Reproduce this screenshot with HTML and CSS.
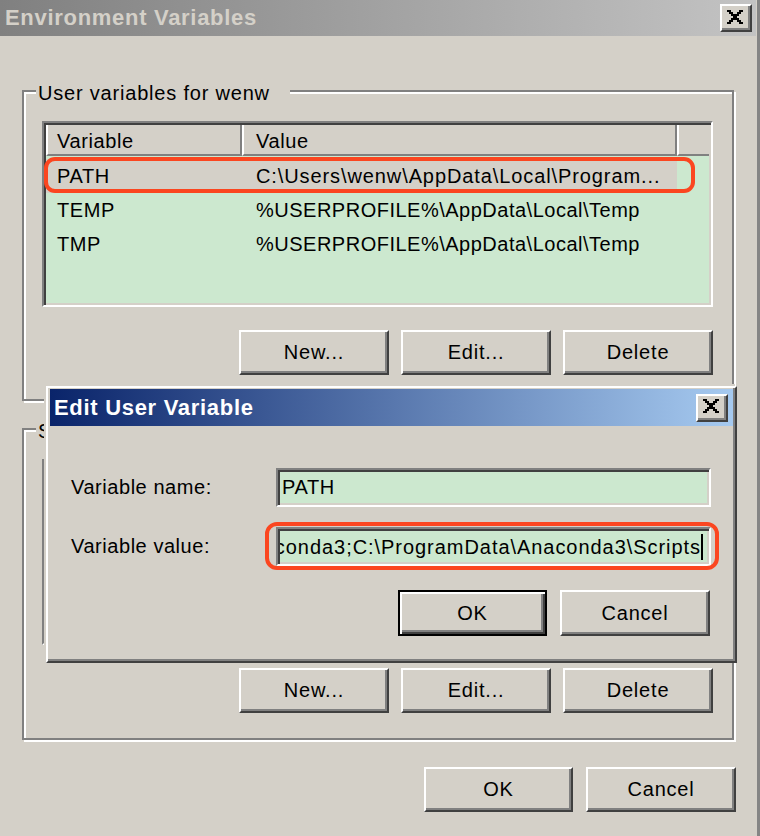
FILE: index.html
```html
<!DOCTYPE html>
<html>
<head>
<meta charset="utf-8">
<link rel="stylesheet" href="styles.css">
</head>
<body>
<div class="window">
  <div class="titlebar">
    <span class="title inactive">Environment Variables</span>
    <div class="close-btn">
      <svg width="16" height="14" viewBox="0 0 16 14" shape-rendering="crispEdges"><path fill="#000" d="M0 0h4v2H0z M12 0h4v2h-4z M2 2h4v2H2z M10 2h4v2h-4z M4 4h8v2H4z M6 6h4v2H6z M4 8h8v2H4z M2 10h4v2H2z M10 10h4v2h-4z M0 12h4v2H0z M12 12h4v2h-4z"/></svg>
    </div>
  </div>

  <div class="content">
    <div class="group">
      <div class="group-label">User variables for wenw</div>
      <div class="listview">
        <div class="lv-header">
          <div class="hc c1">Variable</div>
          <div class="hc c2">Value</div>
          <div class="hc c3"></div>
        </div>
        <div class="lv-body">
          <div class="lv-row selected annotated">
            <div class="cell c1">PATH</div>
            <div class="cell c2 val">C:\Users\wenw\AppData\Local\Program...</div>
          </div>
          <div class="lv-row">
            <div class="cell c1">TEMP</div>
            <div class="cell c2 val tight">%USERPROFILE%\AppData\Local\Temp</div>
          </div>
          <div class="lv-row">
            <div class="cell c1">TMP</div>
            <div class="cell c2 val tight">%USERPROFILE%\AppData\Local\Temp</div>
          </div>
        </div>
      </div>
      <div class="btn-row">
        <div class="btn">New...</div>
        <div class="btn">Edit...</div>
        <div class="btn">Delete</div>
      </div>
    </div>

    <div class="group group2">
      <div class="group-label short">S</div>
      <div class="listview">
        <div class="lv-header">
          <div class="hc c1"></div>
          <div class="hc c2"></div>
          <div class="hc c3"></div>
        </div>
      </div>
      <div class="btn-row">
        <div class="btn">New...</div>
        <div class="btn">Edit...</div>
        <div class="btn">Delete</div>
      </div>
    </div>

    <div class="dlg-buttons">
      <div class="btn">OK</div>
      <div class="btn">Cancel</div>
    </div>
  </div>

  <div class="dialog">
    <div class="titlebar active">
      <span class="title">Edit User Variable</span>
      <div class="close-btn small">
        <svg width="16" height="14" viewBox="0 0 16 14" shape-rendering="crispEdges"><path fill="#000" d="M0 0h4v2H0z M12 0h4v2h-4z M2 2h4v2H2z M10 2h4v2h-4z M4 4h8v2H4z M6 6h4v2H6z M4 8h8v2H4z M2 10h4v2H2z M10 10h4v2h-4z M0 12h4v2H0z M12 12h4v2h-4z"/></svg>
      </div>
    </div>
    <div class="dlg-body">
      <div class="form">
        <div class="flabel">Variable name:</div>
        <div class="field"><div class="field-text">PATH</div></div>
        <div class="flabel">Variable value:</div>
        <div class="field annotated-field"><div class="field-text end"><span class="caret-text">Anaconda3;C:\ProgramData\Anaconda3\Scripts</span></div></div>
      </div>
      <div class="dlg-actions">
        <div class="btn default">OK</div>
        <div class="btn">Cancel</div>
      </div>
    </div>
  </div>
</div>
</body>
</html>
```

FILE: styles.css
```css
* { box-sizing: border-box; }
html, body { margin: 0; padding: 0; }
body {
  width: 760px;
  height: 836px;
  overflow: hidden;
  background: #d4d0c8;
  font-family: "Liberation Sans", Arial, sans-serif;
  font-size: 20px;
  letter-spacing: 0.6px;
  color: #000;
}

.window {
  position: relative;
  width: 760px;
  height: 836px;
  border-right: 3px solid #858585;
  display: flex;
  flex-direction: column;
}

/* title bars */
.titlebar {
  height: 36px;
  margin-right: 1px;
  background: linear-gradient(to right, #808080, #c3c3c3);
  display: flex;
  align-items: center;
  justify-content: space-between;
  padding: 0 4px 0 5px;
  flex-shrink: 0;
}
.title {
  font-weight: bold;
  font-size: 22px;
  letter-spacing: 0.7px;
  color: #fff;
  white-space: nowrap;
}
.title.inactive { color: #d4d0c8; }

.close-btn {
  width: 32px;
  height: 28px;
  background: #d4d0c8;
  border: 2px solid;
  border-color: #fff #404040 #404040 #fff;
  box-shadow: inset -2px -2px 0 #808080;
  display: flex;
  align-items: center;
  justify-content: center;
  padding: 0 2px 3px 0;
}

/* main content */
.content {
  padding: 54px 0 0 22px;
  display: flex;
  flex-direction: column;
}

.group {
  width: 712px;
  height: 311px;
  border: 2px solid #808080;
  box-shadow: inset 2px 2px 0 #fff, 2px 2px 0 #fff;
  padding: 0 19px 0 18px;
  display: flex;
  flex-direction: column;
}
.group2 {
  margin-top: 27px;
  height: 312px;
}
.group-label {
  align-self: flex-start;
  margin: -11px 0 0 -6px;
  padding: 0 20px 0 2px;
  height: 24px;
  line-height: 24px;
  background: #d4d0c8;
  letter-spacing: 0.8px;
  white-space: nowrap;
}
.group-label.short { padding-right: 60px; }

.listview {
  width: 671px;
  height: 186px;
  margin-top: 16px;
  border: 2px solid;
  border-color: #808080 #fff #fff #808080;
  box-shadow: inset 2px 2px 0 #404040, inset -2px -2px 0 #d4d0c8;
  background: #cce8cf;
  padding: 2px;
  display: flex;
  flex-direction: column;
}
.lv-header {
  display: flex;
  height: 31px;
  flex-shrink: 0;
}
.hc {
  background: #d4d0c8;
  border-left: 2px solid #fff;
  border-right: 2px solid #808080;
  border-bottom: 2px solid #808080;
  padding: 4px 0 0 9px;
  display: flex;
  align-items: center;
  white-space: nowrap;
}
.hc.c1 { width: 196px; }
.hc.c2 { width: 435px; padding-left: 12px; }
.hc.c3 { flex: 1; border-right: none; }

.lv-body {
  padding-top: 3px;
  display: flex;
  flex-direction: column;
}
.lv-row {
  display: flex;
  height: 34px;
  align-items: center;
  width: 631px;
  position: relative;
}
.lv-row.selected { background: #d4d0c8; }
.lv-row.annotated::after {
  content: "";
  position: absolute;
  left: -2px;
  right: -18px;
  top: -2px;
  bottom: 0;
  border: 4px solid #fb4620;
  border-radius: 11px;
  z-index: 3;
}
.cell { white-space: nowrap; overflow: hidden; }
.cell.c1 { width: 196px; padding-left: 11px; }
.cell.c2 { flex: 1; padding-left: 14px; }
.val { letter-spacing: 0.9px; }
.val.tight { letter-spacing: 0.5px; }

/* buttons */
.btn-row {
  display: flex;
  justify-content: flex-end;
  gap: 12px;
  margin-top: 23px;
}
.btn {
  width: 150px;
  height: 45px;
  background: #d4d0c8;
  border: 2px solid;
  border-color: #fff #404040 #404040 #fff;
  box-shadow: inset -2px -2px 0 #808080;
  display: flex;
  align-items: center;
  justify-content: center;
  letter-spacing: 0.8px;
  white-space: nowrap;
}

.dlg-buttons {
  width: 714px;
  margin-top: 27px;
  display: flex;
  justify-content: flex-end;
  gap: 13px;
}
.dlg-buttons .btn:first-child { width: 149px; }

/* edit dialog */
.dialog {
  position: absolute;
  left: 46px;
  top: 386px;
  width: 691px;
  height: 277px;
  background: #d4d0c8;
  border: 2px solid;
  border-color: #fff #404040 #404040 #fff;
  box-shadow: -2px -2px 0 #d4d0c8, inset -2px -2px 0 #808080;
  padding: 1px 2px 0 2px;
  display: flex;
  flex-direction: column;
  z-index: 2;
}
.titlebar.active {
  height: 37px;
  margin-right: 0;
  background: linear-gradient(to right, #0a246a, #a6caf0);
  padding: 0 5px 0 4px;
}
.close-btn.small {
  width: 32px;
  height: 28px;
}

.dlg-body {
  padding: 42px 22px 0 21px;
  display: flex;
  flex-direction: column;
}
.form {
  display: grid;
  grid-template-columns: 205px 435px;
  row-gap: 20px;
  align-items: center;
}
.flabel {
  letter-spacing: 0.55px;
  white-space: nowrap;
}
.field {
  height: 39px;
  border: 2px solid;
  border-color: #808080 #fff #fff #808080;
  box-shadow: inset 2px 2px 0 #404040, inset -2px -2px 0 #d4d0c8;
  background: #cce8cf;
  padding: 2px;
  position: relative;
}
.field-text {
  height: 100%;
  overflow: hidden;
  display: flex;
  align-items: center;
  padding-left: 2px;
  white-space: nowrap;
  letter-spacing: 0.6px;
}
.field-text.end {
  justify-content: flex-end;
  padding: 0 4px 0 0;
}
.caret-text {
  flex-shrink: 0;
  letter-spacing: 0.95px;
  border-right: 2px solid #000;
  line-height: 26px;
}
.annotated-field::after {
  content: "";
  position: absolute;
  left: -13px;
  right: -10px;
  top: -7px;
  bottom: -6px;
  border: 4px solid #fb4620;
  border-radius: 12px;
}

.dlg-actions {
  display: flex;
  justify-content: flex-end;
  gap: 13px;
  margin-top: 24px;
  padding-right: 1px;
}
.dlg-actions .btn { height: 46px; }
.btn.default {
  width: 149px;
  border: 2px solid #000;
  box-shadow: inset 2px 2px 0 #fff, inset -2px -2px 0 #404040, inset -4px -4px 0 #808080;
}
```
